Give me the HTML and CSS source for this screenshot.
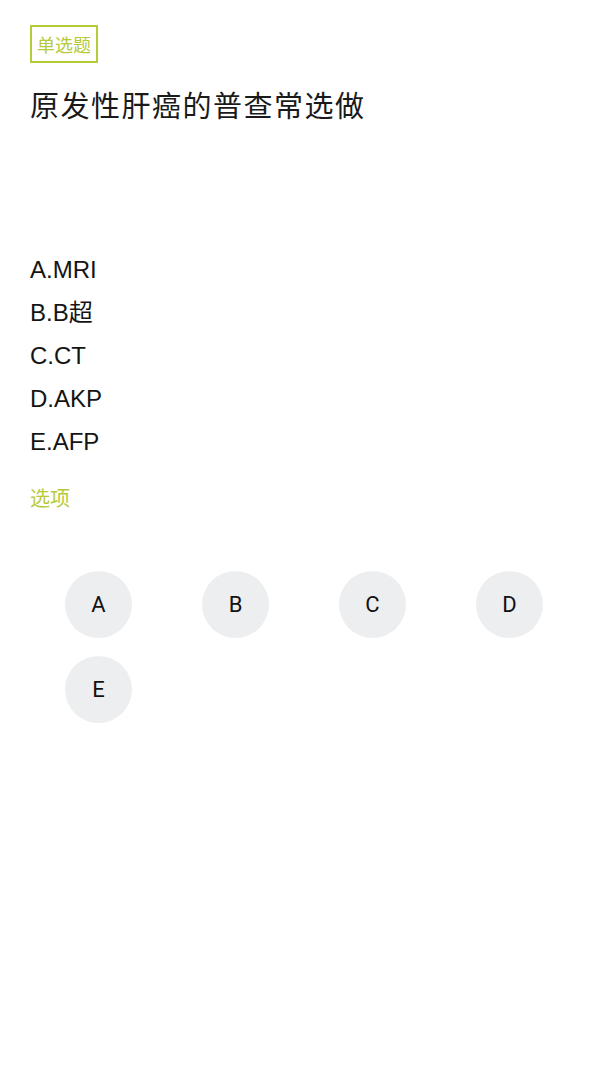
FILE: index.html
```html
<!DOCTYPE html>
<html lang="zh-CN">
<head>
<meta charset="utf-8">
<title>单选题</title>
<link rel="stylesheet" href="styles.css">
</head>
<body>
<div class="page">
  <div class="tag-row"><span class="tag">单选题</span></div>
  <h1 class="title">原发性肝癌的普查常选做</h1>
  <ul class="options">
    <li>A.MRI</li>
    <li>B.B超</li>
    <li>C.CT</li>
    <li>D.AKP</li>
    <li>E.AFP</li>
  </ul>
  <div class="label">选项</div>
  <div class="choices">
    <div class="cell"><span class="circle">A</span></div>
    <div class="cell"><span class="circle">B</span></div>
    <div class="cell"><span class="circle">C</span></div>
    <div class="cell"><span class="circle">D</span></div>
    <div class="cell"><span class="circle">E</span></div>
  </div>
</div>
</body>
</html>
```
FILE: styles.css
```css
html, body {
  margin: 0;
  padding: 0;
  background: #ffffff;
}
body {
  font-family: "Liberation Sans", "Noto Sans CJK SC", sans-serif;
  color: #151515;
}
.page {
  padding: 25px 30px 0 30px;
}
.tag-row {
  display: flex;
}
.tag {
  display: block;
  border: 2px solid #b6ca3a;
  color: #b6ca3a;
  font-family: "Noto Sans CJK SC", sans-serif;
  font-size: 18px;
  height: 34px;
  line-height: 34px;
  padding: 0 5px;
}
.title {
  margin: 21px 0 0 0;
  font-family: "Noto Sans CJK SC", sans-serif;
  font-weight: normal;
  font-size: 29px;
  letter-spacing: 1.5px;
  line-height: 40px;
  color: #1a1a1a;
}
.options {
  list-style: none;
  margin: 124px 0 0 0;
  padding: 0;
}
.options li {
  font-size: 24px;
  line-height: 43px;
  height: 43px;
  color: #141414;
}
.label {
  margin-top: 20px;
  font-family: "Noto Sans CJK SC", sans-serif;
  color: #b6ca3a;
  font-size: 20px;
  line-height: 30px;
}
.choices {
  margin-top: 58px;
  display: grid;
  grid-template-columns: repeat(4, 137px);
  row-gap: 18px;
}
.cell {
  display: flex;
  justify-content: center;
}
.circle {
  width: 67px;
  height: 67px;
  border-radius: 50%;
  background: #eceef0;
  display: flex;
  align-items: center;
  justify-content: center;
  font-family: Roboto, "Liberation Sans", sans-serif;
  font-size: 22px;
  color: #111111;
}
```
